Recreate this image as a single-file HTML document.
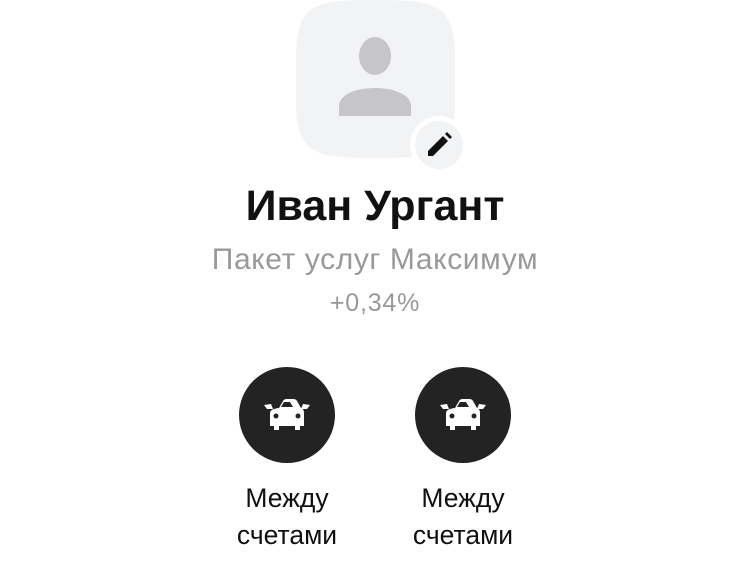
<!DOCTYPE html>
<html><head><meta charset="utf-8"><style>
body{margin:0;width:750px;height:568px;background:#fff;font-family:"Liberation Sans",sans-serif;position:relative;overflow:hidden}
.t{position:absolute;left:0;width:750px;text-align:center;white-space:nowrap}
.btn{position:absolute;width:96px;height:96px;border-radius:50%;background:#232323;top:367px}
.lbl{position:absolute;width:200px;text-align:center;font-size:26.5px;line-height:37px;color:#111;top:480px}
</style></head><body>
<svg style="position:absolute;left:0;top:0" width="750" height="200">
<path d="M296 60 C296 4 312 0 375 0 C438 0 455 4 455 60 L455 98 C455 154 438 158 375 158 C312 158 296 154 296 98 Z" fill="#f2f3f5"/>
<ellipse cx="375" cy="56" rx="16" ry="19" fill="#c6c6c8"/>
<path d="M339 116 L339 106 C339 95 355 88 375 88 C395 88 411 95 411 106 L411 116 Z" fill="#c6c6c8"/>
<circle cx="439" cy="145" r="29" fill="#fff"/>
<circle cx="439" cy="145" r="24" fill="#f2f3f5"/>
<path d="M428 156 L428 151 L443 136 L448 141 L433 156 Z M445 134 L447 132 L452 137 L450 139 Z" fill="#111"/>
</svg>
<div class="t" style="top:182px;font-size:43px;font-weight:bold;color:#111">Иван Ургант</div>
<div class="t" style="top:243px;font-size:30px;letter-spacing:0.6px;color:#999">Пакет услуг Максимум</div>
<div class="t" style="top:289px;font-size:25px;letter-spacing:0.8px;color:#999">+0,34%</div>
<div class="btn" style="left:239px"></div>
<div class="btn" style="left:415px"></div>
<svg style="position:absolute;left:0;top:0" width="750" height="568">
<g fill="#fff">
<path d="M279 408 L283 401 Q284 399 287 399 L293 399 Q296 399 297 401 L301 408 Q304 409 304 413 L304 426 L300 426 L300 430 L295 430 L295 426 L279 426 L279 430 L274 430 L274 426 L270 426 L270 413 Q270 409 279 408 Z"/>
<path d="M264 405 L271 404 L273 409 L267 409 Z M310 405 L303 404 L301 409 L307 409 Z"/>
<path d="M455 408 L459 401 Q460 399 463 399 L469 399 Q472 399 473 401 L477 408 Q480 409 480 413 L480 426 L476 426 L476 430 L471 430 L471 426 L455 426 L455 430 L450 430 L450 426 L446 426 L446 413 Q446 409 455 408 Z"/>
<path d="M440 405 L447 404 L449 409 L443 409 Z M486 405 L479 404 L477 409 L483 409 Z"/>
</g>
<g fill="#232323">
<path d="M281 407 L284 402 L290 402 L293 407 Z"/>
<circle cx="276" cy="416" r="2.5"/><circle cx="298" cy="416" r="2.5"/>
<path d="M457 407 L460 402 L466 402 L469 407 Z"/>
<circle cx="452" cy="416" r="2.5"/><circle cx="474" cy="416" r="2.5"/>
</g>
</svg>
<div class="lbl" style="left:187px">Между<br>счетами</div>
<div class="lbl" style="left:363px">Между<br>счетами</div>
</body></html>
